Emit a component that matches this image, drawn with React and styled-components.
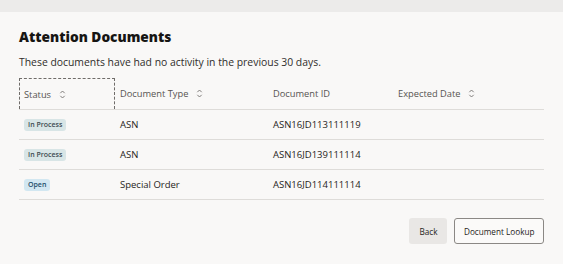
import React from "react";
import styled, { createGlobalStyle } from "styled-components";

const Global = createGlobalStyle`
  html, body {
    margin: 0;
    padding: 0;
    background: #ecebea;
  }
  body {
    font-family: "Open Sans", "Noto Sans", sans-serif;
    color: #161513;
  }
`;

const Backdrop = styled.div`
  width: 563px;
  height: 264px;
  padding-top: 12px;
  box-sizing: border-box;
  background: #ecebea;
  overflow: hidden;
`;

const Dialog = styled.div`
  background: #f9f8f7;
  height: 100%;
  padding: 15px 19px 0 19px;
  box-sizing: border-box;
  display: flex;
  flex-direction: column;
`;

const Title = styled.h2`
  margin: 0;
  font-size: 13.7px;
  font-weight: 800;
  line-height: 20px;
  color: #161513;
`;

const Subtitle = styled.p`
  margin: 7px 0 0 0;
  font-size: 10.4px;
  line-height: 16px;
  color: #302e2b;
`;

const Table = styled.div`
  margin-top: 8px;
  display: flex;
  flex-direction: column;
`;

const Row = styled.div`
  display: grid;
  grid-template-columns: 96px 153px 125px 1fr;
  height: ${(p) => (p.$head ? 32 : 30)}px;
  box-sizing: border-box;
  border-bottom: 1px solid #dedcd9;
  align-items: center;
  font-size: ${(p) => (p.$head ? 9.3 : 9.5)}px;
  color: ${(p) => (p.$head ? "#575451" : "#262421")};
`;

const Cell = styled.div`
  padding-left: 5px;
  display: flex;
  align-items: center;
  gap: 8px;
  height: 100%;
  box-sizing: border-box;
  ${(p) => p.$focus && `border: 1px dashed #6f6c69; border-bottom: none; padding-left: 4px;`}
`;

const Badge = styled.span`
  display: inline-block;
  font-size: 7px;
  font-weight: 600;
  line-height: 12px;
  padding: 0 4px;
  border-radius: 3px;
  color: ${(p) => (p.$open ? "#1d4e6b" : "#3c4a50")};
  background: ${(p) => (p.$open ? "#d2e7f1" : "#d8e5e6")};
`;

const Footer = styled.div`
  margin-top: auto;
  margin-bottom: 20px;
  display: flex;
  justify-content: flex-end;
  gap: 7px;
`;

const Button = styled.button`
  font-family: inherit;
  font-size: 8.2px;
  height: 26px;
  padding: 0 ${(p) => (p.$outline ? 8.5 : 9)}px;
  border-radius: 3px;
  color: #262421;
  background: ${(p) => (p.$outline ? "#fbfaf9" : "#e9e7e5")};
  border: 1px solid ${(p) => (p.$outline ? "#8b8885" : "transparent")};
`;

const Sort = () => (
  <svg width="7" height="9" viewBox="0 0 8 10" fill="none" stroke="#6f6c69" strokeWidth="1">
    <path d="M1.5 3.5 L4 1 L6.5 3.5" />
    <path d="M1.5 6.5 L4 9 L6.5 6.5" />
  </svg>
);

const rows = [
  { status: "In Process", type: "ASN", id: "ASN16JD113111119" },
  { status: "In Process", type: "ASN", id: "ASN16JD139111114" },
  { status: "Open", type: "Special Order", id: "ASN16JD114111114", open: true },
];

export default function App() {
  return (
    <>
      <Global />
      <Backdrop>
        <Dialog>
          <Title>Attention Documents</Title>
          <Subtitle>These documents have had no activity in the previous 30 days.</Subtitle>
          <Table>
            <Row $head>
              <Cell $focus>Status <Sort /></Cell>
              <Cell>Document Type <Sort /></Cell>
              <Cell>Document ID</Cell>
              <Cell>Expected Date <Sort /></Cell>
            </Row>
            {rows.map((r) => (
              <Row key={r.id}>
                <Cell><Badge $open={r.open}>{r.status}</Badge></Cell>
                <Cell>{r.type}</Cell>
                <Cell>{r.id}</Cell>
                <Cell />
              </Row>
            ))}
          </Table>
          <Footer>
            <Button>Back</Button>
            <Button $outline>Document Lookup</Button>
          </Footer>
        </Dialog>
      </Backdrop>
    </>
  );
}
